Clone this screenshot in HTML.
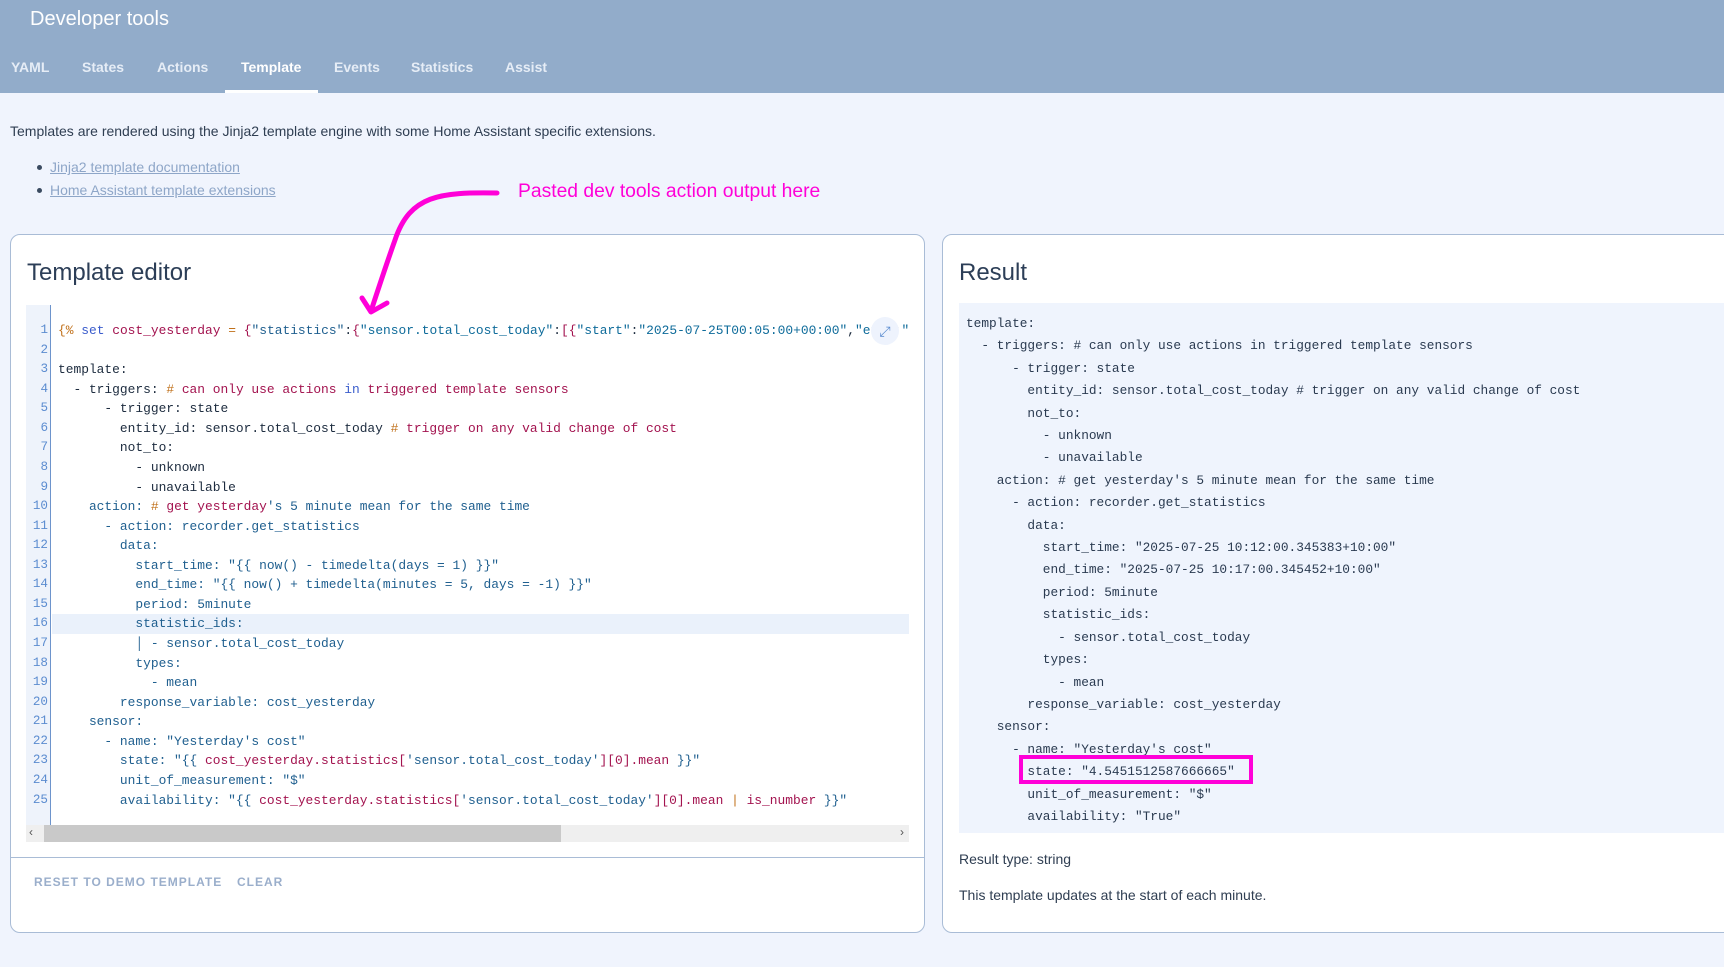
<!DOCTYPE html>
<html><head><meta charset="utf-8"><style>
*{box-sizing:border-box;margin:0;padding:0}
body{width:1724px;height:967px;overflow:hidden;background:#f0f4fd;font-family:"Liberation Sans",sans-serif;color:#2c3e57;position:relative}
.hdr{position:absolute;left:0;top:0;width:1724px;height:93px;background:#92acca}
.title{position:absolute;left:30px;top:8px;font-size:20px;color:#fff}
.tab{position:absolute;top:59px;font-size:14px;font-weight:bold;color:#e6edf6}
.ul{position:absolute;left:225px;top:90px;width:93px;height:3px;background:#fff}
.p{position:absolute;left:10px;top:123px;font-size:14px;color:#2f3e52}
.lnk{position:absolute;left:50px;font-size:14px;color:#8ea6c8;text-decoration:underline}
.dot{position:absolute;left:37px;width:5px;height:5px;border-radius:50%;background:#3a4a60}
.ann{position:absolute;left:518px;top:181px;font-size:19.3px;color:#ff00d8}
.card{position:absolute;top:234px;height:699px;background:#fff;border:1px solid #a9bcd6;border-radius:10px}
.h2{position:absolute;font-size:24px;color:#2c3e57;top:259px}
.code{position:absolute;left:26px;top:305px;width:883px;height:537px;background:#fff;overflow:hidden}
.gut{position:absolute;left:0;top:0;width:25px;height:520px;background:#eef3fb;border-right:1px solid #6d94cc}
pre{font-family:"Liberation Mono",monospace}
.nums{position:absolute;left:0;top:16px;width:22px;text-align:right;font-size:12.6px;line-height:19.56px;color:#5b8cd0}
.src{position:absolute;left:32px;top:16px;font-size:12.9px;line-height:19.56px;color:#1c2b3e;white-space:pre}
.hl{position:absolute;left:26px;width:857px;height:19.5px;background:#eaf1fb}
.k{color:#1f5f8f}.s{color:#0e6b9a}.c{color:#a3134f}.o{color:#c0701a}.b{color:#3a5ccc}.d{color:#1c2b3e}
.sb{position:absolute;left:0;top:520px;width:883px;height:17px;background:#efefef}
.th{position:absolute;left:18px;top:0;width:517px;height:17px;background:#c9c9c9}
.btn{position:absolute;top:875px;font-size:12px;font-weight:bold;letter-spacing:1px;color:#9aaecb}
.res{position:absolute;left:959px;top:303px;width:765px;height:530px;background:#eff4fd}
.rsrc{position:absolute;left:7px;top:10px;font-size:12.8px;line-height:22.4px;color:#2a3a50;white-space:pre}
.box{position:absolute;left:1019px;top:755px;width:234px;height:29px;border:4px solid #ff00d8}
.rt{position:absolute;left:959px;font-size:14px;color:#2f3e52}
</style></head><body>
<div class="hdr">
<div class="title">Developer tools</div>
<div class="tab" style="left:11px">YAML</div>
<div class="tab" style="left:82px">States</div>
<div class="tab" style="left:157px">Actions</div>
<div class="tab" style="left:241px;color:#fff">Template</div>
<div class="tab" style="left:334px">Events</div>
<div class="tab" style="left:411px">Statistics</div>
<div class="tab" style="left:505px">Assist</div>
<div class="ul"></div>
</div>
<div class="p">Templates are rendered using the Jinja2 template engine with some Home Assistant specific extensions.</div>
<div class="dot" style="top:165px"></div><div class="lnk" style="top:159px">Jinja2 template documentation</div>
<div class="dot" style="top:188px"></div><div class="lnk" style="top:182px">Home Assistant template extensions</div>

<div class="card" style="left:10px;width:915px"></div>
<div class="card" style="left:942px;width:800px"></div>
<div class="h2" style="left:27px">Template editor</div>
<div class="h2" style="left:959px">Result</div>

<div class="code">
<div class="hl" style="top:309px"></div>
<div class="gut"></div>
<pre class="nums">1
2
3
4
5
6
7
8
9
10
11
12
13
14
15
16
17
18
19
20
21
22
23
24
25</pre>
<pre class="src"><span class="o">{%</span> <span class="b">set</span> <span class="c">cost_yesterday</span> <span class="o">=</span> <span class="c">{</span><span class="k">"statistics"</span>:<span class="c">{</span><span class="s">"sensor.total_cost_today"</span>:<span class="c">[{</span><span class="s">"start"</span>:<span class="s">"2025-07-25T00:05:00+00:00"</span>,<span class="s">"end"</span>:<span class="s">"2025</span>
 
template:
  - triggers: <span class="o">#</span> <span class="c">can only use actions</span> <span class="b">in</span> <span class="c">triggered template sensors</span>
      - trigger: state
        entity_id: sensor.total_cost_today <span class="o">#</span> <span class="c">trigger on any valid change of cost</span>
        not_to:
          - unknown
          - unavailable
<span class="k">    action: <span class="o">#</span> <span class="c">get yesterday</span>'s 5 minute mean for the same time
      - action: recorder.get_statistics
        data:
          start_time: "{{ now() - timedelta(days = 1) }}"
          end_time: "{{ now() + timedelta(minutes = 5, days = -1) }}"
          period: 5minute
          statistic_ids:
          │ - sensor.total_cost_today
          types:
            - mean
        response_variable: cost_yesterday
    sensor:
      - name: "Yesterday's cost"
        state: "{{ <span class="c">cost_yesterday.statistics[</span>'sensor.total_cost_today'<span class="c">][0].mean</span> }}"
        unit_of_measurement: "$"
        availability: "{{ <span class="c">cost_yesterday.statistics[</span>'sensor.total_cost_today'<span class="c">][0].mean</span> <span class="o">|</span> <span class="c">is_number</span> }}"</span></pre>
<div style="position:absolute;left:845px;top:12px;width:28px;height:28px;border-radius:50%;background:#eef3fd;color:#5b8cd0;font-size:14px;text-align:center;line-height:28px">⤢</div>
<div class="sb"><div class="th"></div><span style="position:absolute;left:3px;top:0;font-size:12px;color:#555">‹</span><span style="position:absolute;right:5px;top:0;font-size:12px;color:#555">›</span></div>
</div>
<div style="position:absolute;left:11px;top:857px;width:913px;height:1px;background:#a9bcd6"></div>
<div class="btn" style="left:34px">RESET TO DEMO TEMPLATE</div>
<div class="btn" style="left:237px">CLEAR</div>

<div class="res"><pre class="rsrc">template:
  - triggers: # can only use actions in triggered template sensors
      - trigger: state
        entity_id: sensor.total_cost_today # trigger on any valid change of cost
        not_to:
          - unknown
          - unavailable
    action: # get yesterday's 5 minute mean for the same time
      - action: recorder.get_statistics
        data:
          start_time: "2025-07-25 10:12:00.345383+10:00"
          end_time: "2025-07-25 10:17:00.345452+10:00"
          period: 5minute
          statistic_ids:
            - sensor.total_cost_today
          types:
            - mean
        response_variable: cost_yesterday
    sensor:
      - name: "Yesterday's cost"
        state: "4.5451512587666665"
        unit_of_measurement: "$"
        availability: "True"</pre></div>
<div class="box"></div>
<div class="rt" style="top:851px">Result type: string</div>
<div class="rt" style="top:887px">This template updates at the start of each minute.</div>

<div class="ann">Pasted dev tools action output here</div>
<svg style="position:absolute;left:0;top:0" width="1724" height="967">
<path d="M497 193 C440 192 410 195 395 240 C385 268 378 290 371 311" fill="none" stroke="#ff00d8" stroke-width="5" stroke-linecap="round"/>
<path d="M362 298 L371 312 L387 303" fill="none" stroke="#ff00d8" stroke-width="5" stroke-linecap="round" stroke-linejoin="round"/>
</svg>
</body></html>
